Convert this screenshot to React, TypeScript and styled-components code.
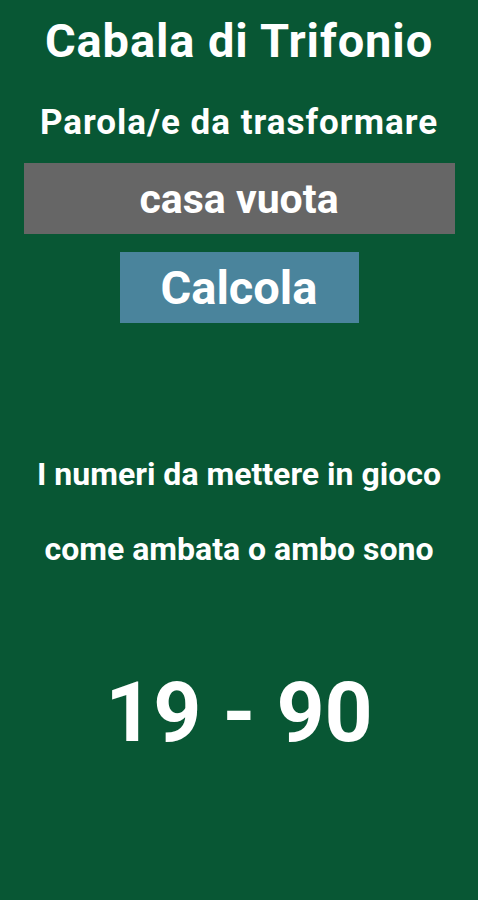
import styled, { createGlobalStyle } from "styled-components";

const GlobalStyle = createGlobalStyle`
  html, body {
    margin: 0;
    padding: 0;
    background: #085734;
  }
  body {
    font-family: Roboto, "Liberation Sans", sans-serif;
  }
`;

export default function App() {
  return (
    <>
      <GlobalStyle />
      <Screen>
        <Title>Cabala di Trifonio</Title>
        <Label>Parola/e da trasformare</Label>
        <WordInput defaultValue="casa vuota" />
        <CalcButton>Calcola</CalcButton>
        <Message>I numeri da mettere in gioco</Message>
        <Message $second>come ambata o ambo sono</Message>
        <Result>19 - 90</Result>
      </Screen>
    </>
  );
}

const Screen = styled.div`
  display: flex;
  flex-direction: column;
  align-items: center;
  width: 478px;
  height: 900px;
  background: #085734;
  color: #ffffff;
`;

const Title = styled.h1`
  margin: 13px 0 0;
  font-size: 47px;
  font-weight: 700;
  line-height: 56px;
  letter-spacing: 0.9px;
`;

const Label = styled.p`
  margin: 33px 0 0;
  font-size: 35px;
  font-weight: 700;
  line-height: 42px;
  letter-spacing: 1px;
`;

const WordInput = styled.input`
  box-sizing: border-box;
  margin-top: 19px;
  width: 431px;
  height: 71px;
  padding: 0;
  border: none;
  outline: none;
  background: #666666;
  color: #ffffff;
  text-align: center;
  font-family: Roboto, "Liberation Sans", sans-serif;
  font-size: 41px;
  font-weight: 700;
`;

const CalcButton = styled.button`
  box-sizing: border-box;
  margin-top: 18px;
  width: 239px;
  height: 71px;
  padding: 0;
  border: none;
  background: #4a849c;
  color: #ffffff;
  font-family: Roboto, "Liberation Sans", sans-serif;
  font-size: 47px;
  font-weight: 700;
`;

const Message = styled.p<{ $second?: boolean }>`
  margin: ${(p) => (p.$second ? "37px" : "132px")} 0 0;
  font-size: 32px;
  font-weight: 700;
  line-height: 38px;
`;

const Result = styled.p`
  margin: 95px 0 0;
  font-size: 84px;
  font-weight: 700;
  line-height: 100px;
`;
